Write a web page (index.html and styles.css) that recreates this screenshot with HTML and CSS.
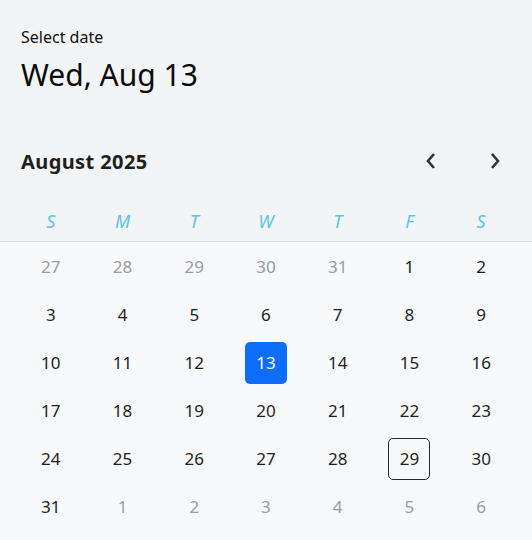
FILE: index.html
```html
<!DOCTYPE html>
<html>
<head>
<meta charset="utf-8">
<link rel="stylesheet" href="styles.css">
</head>
<body>
<div class="picker">
  <div class="head">
    <div class="label">Select date</div>
    <div class="current">Wed, Aug 13</div>
    <div class="nav">
      <div class="month">August 2025</div>
      <div class="arrows">
        <button class="arrow" aria-label="Previous month"><svg width="12" height="18" viewBox="0 0 12 18"><path d="M9 2 L3 9 L9 16" fill="none" stroke="#333" stroke-width="2.6" stroke-linejoin="miter" stroke-linecap="butt"/></svg></button>
        <button class="arrow" aria-label="Next month"><svg width="12" height="18" viewBox="0 0 12 18"><path d="M3 2 L9 9 L3 16" fill="none" stroke="#333" stroke-width="2.6" stroke-linejoin="miter" stroke-linecap="butt"/></svg></button>
      </div>
    </div>
    <div class="weekdays">
      <span>S</span><span>M</span><span>T</span><span>W</span><span>T</span><span>F</span><span>S</span>
    </div>
  </div>
  <div class="days">
    <span class="day muted">27</span><span class="day muted">28</span><span class="day muted">29</span><span class="day muted">30</span><span class="day muted">31</span><span class="day">1</span><span class="day">2</span>
    <span class="day">3</span><span class="day">4</span><span class="day">5</span><span class="day">6</span><span class="day">7</span><span class="day">8</span><span class="day">9</span>
    <span class="day">10</span><span class="day">11</span><span class="day">12</span><span class="day selected">13</span><span class="day">14</span><span class="day">15</span><span class="day">16</span>
    <span class="day">17</span><span class="day">18</span><span class="day">19</span><span class="day">20</span><span class="day">21</span><span class="day">22</span><span class="day">23</span>
    <span class="day">24</span><span class="day">25</span><span class="day">26</span><span class="day">27</span><span class="day">28</span><span class="day today">29</span><span class="day">30</span>
    <span class="day">31</span><span class="day muted">1</span><span class="day muted">2</span><span class="day muted">3</span><span class="day muted">4</span><span class="day muted">5</span><span class="day muted">6</span>
  </div>
</div>
</body>
</html>
```
FILE: styles.css
```css
html, body {
  margin: 0;
  padding: 0;
  background: #f8f9fb;
}
body {
  font-family: "Noto Sans", "Open Sans", sans-serif;
  color: #1c1c1c;
  width: 532px;
  height: 540px;
  overflow: hidden;
}
.head {
  background: #f3f4f6;
  border-bottom: 1px solid #dcdde0;
}
.label {
  padding: 25px 21px 0;
  font-size: 16px;
  line-height: 24px;
  color: #111;
}
.current {
  padding: 12px 21px 0;
  font-size: 30px;
  line-height: 28px;
  color: #0b0b0b;
}
.nav {
  display: flex;
  align-items: center;
  justify-content: space-between;
  padding: 0 21px;
  margin-top: 57px;
  height: 30px;
}
.month {
  font-size: 20px;
  letter-spacing: 0.4px;
  font-weight: 700;
  color: #1e1f22;
}
.arrows {
  display: flex;
  gap: 40px;
  margin-right: 4px;
}
.arrow {
  border: 0;
  background: none;
  padding: 0;
  width: 24px;
  height: 24px;
  display: flex;
  align-items: center;
  justify-content: center;
}
.weekdays {
  display: grid;
  grid-template-columns: repeat(7, 1fr);
  padding: 0 15px;
  margin-top: 24px;
  height: 41px;
  align-items: center;
  font-style: italic;
  font-size: 18px;
  color: #5bc5e5;
  text-align: center;
}
.days {
  display: grid;
  grid-template-columns: repeat(7, 1fr);
  grid-auto-rows: 48px;
  padding: 1px 15px 0;
}
.day {
  justify-self: center;
  align-self: center;
  width: 42px;
  height: 42px;
  line-height: 42px;
  text-align: center;
  font-size: 17px;
  color: #1f1f1f;
  border-radius: 5px;
  box-sizing: border-box;
}
.day.muted {
  color: #999ca3;
}
.day.selected {
  background: #0d6efd;
  color: #fff;
}
.day.today {
  border: 1px solid #2a2a2a;
  line-height: 40px;
}
```
